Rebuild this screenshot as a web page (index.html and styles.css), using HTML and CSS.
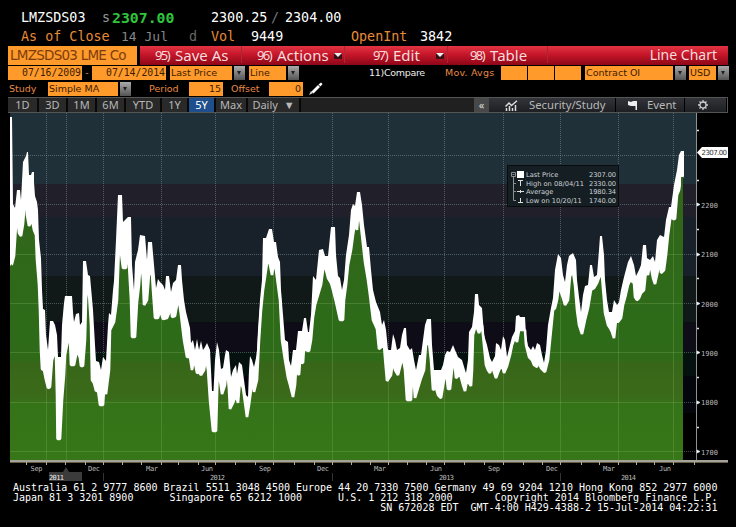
FILE: index.html
```html
<!DOCTYPE html>
<html lang="en">
<head>
    <meta charset="UTF-8">
    <title>LMZSDS03 Line Chart</title>
    <link rel="stylesheet" href="styles.css">
</head>
<body>
<header class="quote">
    <div class="quote-row price-row">
        <span class="ticker">LMZSDS03</span>
        <span class="side">s</span>
        <span class="last">2307.00</span>
        <span class="bid">2300.25</span>
        <span class="slash">/</span>
        <span class="ask">2304.00</span>
    </div>
    <div class="quote-row info-row">
        <span class="asof">As of Close</span>
        <span class="date">14 Jul</span>
        <span class="freq">d</span>
        <span class="vol">Vol</span>
        <span class="vol-value">9449</span>
        <span class="open">OpenInt</span>
        <span>3842</span>
    </div>
</header>

<nav class="menu">
    <div class="security">LMZSDS03 LME Co</div>
    <div class="menu-item save"><i>95)</i>Save As</div>
    <div class="menu-item actions"><i>96)</i>Actions<b class="drop"></b></div>
    <div class="menu-item edit"><i>97)</i>Edit<b class="drop"></b></div>
    <div class="menu-item table"><i>98)</i>Table</div>
    <div class="menu-title">Line Chart</div>
</nav>

<div class="controls">
    <span class="field from">07/16/2009</span>
    <span class="dash">-</span>
    <span class="field to">07/14/2014</span>
    <span class="field price">Last Price</span>
    <span class="arrow"></span>
    <span class="field line">Line</span>
    <span class="arrow"></span>
    <span class="compare">11)Compare</span>
    <span class="avgs">Mov. Avgs</span>
    <span class="field avg"></span>
    <span class="field avg"></span>
    <span class="field avg"></span>
    <span class="field contract">Contract OI</span>
    <span class="arrow"></span>
    <span class="field usd">USD</span>
    <span class="arrow"></span>
</div>

<div class="controls study">
    <span class="study-label">Study</span>
    <span class="field simple">Simple MA</span>
    <span class="arrow"></span>
    <span class="period-label">Period</span>
    <span class="field period">15</span>
    <span class="offset-label">Offset</span>
    <span class="field offset">0</span>
    <svg class="pencil" width="16" height="14" viewBox="0 0 16 14">
        <path d="M1 13l2-4 2 2z" fill="#ddd"/>
        <path d="M3.500 9.500L10 3l2 2-6.500 6.500z" fill="#fff"/>
        <path d="M10.500 2.500L13 .5l1.500 1.500-2 2.500z" fill="#fff"/>
    </svg>
</div>

<div class="tabs">
    <span class="tab t1">1D</span>
    <span class="tab t2">3D</span>
    <span class="tab t3">1M</span>
    <span class="tab t4">6M</span>
    <span class="tab t5">YTD</span>
    <span class="tab t6">1Y</span>
    <span class="tab t7 active">5Y</span>
    <span class="tab t8">Max</span>
    <span class="tab t9">Daily <em>▼</em></span>
    <span class="collapse">«</span>
    <span class="tool security-study">
        <svg width="13" height="11" viewBox="0 0 13 11">
            <path d="M.5 6.500L4 3l2.500 2.500L12 .8" fill="none" stroke="#ddd" stroke-width="1.500"/>
            <path d="M1.500 11V8M4.500 11V6M7.500 11V8M10.500 11V5" stroke="#ddd" stroke-width="1.500"/>
        </svg>
        Security/Study
    </span>
    <span class="tool event">
        <svg width="9" height="10" viewBox="0 0 9 10">
            <path d="M0 1l3 1 2-1h4v9H7.500V6L3 6 0 5z" fill="#eee"/>
        </svg>
        Event
    </span>
    <span class="tool gear">
        <svg width="10" height="10" viewBox="0 0 10 10">
            <circle cx="5" cy="5" r="3" fill="none" stroke="#ccc" stroke-width="1.300"/>
            <path d="M5 0v2M5 8v2M0 5h2M8 5h2M1.500 1.500l1.300 1.300M7.200 7.200l1.300 1.300M8.500 1.500L7.200 2.800M2.800 7.200L1.500 8.500" stroke="#ccc" stroke-width="1.300"/>
        </svg>
    </span>
</div>

<div class="chart">
    <svg class="plot" width="736" height="371" viewBox="0 112 736 371">
        <!-- background bands -->
        <rect x="10" y="113" width="687" height="71" fill="#203038"/>
        <rect x="10" y="184" width="687" height="33" fill="#211f29"/>
        <rect x="10" y="217" width="687" height="59" fill="#182029"/>
        <rect x="10" y="276" width="687" height="46" fill="#101918"/>
        <rect x="10" y="322" width="687" height="30" fill="#0e0d17"/>
        <rect x="10" y="352" width="687" height="24" fill="#04110f"/>
        <rect x="10" y="376" width="687" height="37" fill="#05050e"/>
        <path class="grid" d="M10 155.500H697M10 204.500H697M10 254.500H697M10 303.500H697M10 352.500H697M10 402.500H697M10 451.500H697"/>
        <path class="grid" d="M46.500 113V460M66.500 113V460M103.500 113V460M161.500 113V460M215.500 113V460M273.500 113V460M332.500 113V460M388.500 113V460M444.500 113V460M503.500 113V460M560.500 113V460M618.500 113V460M673.500 113V460"/>

        <!-- price line, thick -->
        <path fill="#fff" d="M10 460V117H12L13 204 15 208 17 190H20L21 200 23 162 26 156 27 152H28L29 175H31L32 172H34L34 182 35 196 37 202 38 210 39 240 41 258 42 290 43 309 45 310 46 335 48 350 50 321 53 321 55 325 57 335 58 357H61L62 325 64 303 65 296H72L73 312 74 322 76 314 79 313 80 325 82 322 83 261H86L88 275 90 276 93 310 95 345 96 361 99 362 101 370 103 357 106 361 108 325 109 313 111 315 113 290 114 281 116 240 118 195H122L123 222 126 219 128 217H131L132 265 134 290 135 262 138 250 140 235 145 236 147 260 148 242H152L154 265 156 288 158 279 160 282 163 285 165 290 166 276H169L171 292 173 283 176 280 178 265H181L182 280 184 300 186 312 190 328 191 343 193 340 195 350 197 339 199 350 201 341 203 350 205 347 207 343 210 350 211 370 212 391H213.500L215 360 217 342 219 350 221 369 223 368 225 355 226 350 229 352 231 377 233 370 236 365 237 374 239 362 242 365 244 380 246 395 248 397 249 370 250 356 252 360 254 367 256 358 257 350 258 330 260 300 262 280 263 238H266L267 235 269 229H272L274 242H276L278 257 280 262 281 290 283 315 285 340 288 342 289 360 291 366 293 350 296 350 298 331H302L304 318H306L308 332 309 332 311 315 313 276 316 280 319 250 323 249 325 256H328L329 246 331 227H335L336 255 338 276 340 278 342 290 344 280 346 255 349 235 351 210 353 204 355 206 357 192H360L362 205 364 225 367 247H369L371 270 373 290 376 302 380 312 382 325 384 320 386 330 388 350 391 350 393 334 395 340 397 350 400 348 402 335 404 328H406L407 345 410 350 412 348 414 360 416 370 419 355 421 355 423 340 425 325 427 319H431L432 345 434 370H441L443 365 445 355 447 351 450 352 453 345 455 350 458 357 462 360 465 370 466 373 468 360 469 332 472 327 474 312 475 294H478L479 305 482 308 484 335 487 345 490 358 492 362 495 356 496 343 499 345 501 350 503 336 505 340 507 357 510 345 512 337 515 331 516 316 519 315 520 317H525L526 335 528 346 531 350 533 346 535 350 537 343 540 345 542 355 544 363 546 350 548 325 551 308 553 298 555 270 558 254 561 258 563 275 565 282 567 265 569 256 573 253 576 260 577 280 579 297 581 312 583 295 585 286 588 285 590 265 592 265 594 277 597 275 599 250 600 236H602L604 255 605 280 607 300 609 312H612L614 300 617 305 619 302 621 290 624 277 628 262 631 256 634 265 636 276 639 270 641 265 643 245H646L647 258 650 260 653 256 655 262 657 240 660 235 664 237 666 220 669 207H671L674 185 677 170 679 155 681 151H684L684 176 683 178V460Z"/>

        <!-- filled area -->
        <defs>
            <path id="area" d="M10 460V266L12 264 14 256 16 225 18 224 19 233 21 236 23 224 25 200 26 190 27 215 29 226 31 222 32 220 34 230 36 235 37 260 39 285 40 310 41 350 42 369 44 370 46 380 48 388 50 387 52 360 54 354 56 355 57 395 57.500 439H60L62 400 64 375 65 355 68 340 70 340 71 365H74L76 355 78 352 80 358 81 366H83L85 340 86 300 87 289 89 293 91 325 92 380 94 383 96 391 98 390 100 405H103L104 390 106 394 109 370 110 330 114 322 117 300 119 245 121 253 123 268H126L127 250 129 265 131 300 132 337H135L137 302 139 285 141 256 143 280 144 305 147 300 149 274H152L153 290 155 318H158L160 310 163 319 167 318 169 313 171 305 172 317 175 316 177 305 179 300 181 315 184 340 187 357H190L192 370 194 358 197 373 199 372 201 375 204 370 206 358 208 370 210 400 213 431H216L217 395 218 365 220 380 222 394 225 385 227 365 229 390 230 409 233 403 236 395 238 403 240 380 243 388 247 417 249 405 251 390 253 375 254 392 257 380 259 340 261 310 263 290 266 270 268 256 270 265 272 275 274 262 276 270 278 285 280 300 282 340 285 360 288 378 290 385 293 397 295 385 296 370 299 375 300 362 303 363 304 348 306 350 309 351 311 340 313 317 315 305 318 295 321 285 323 270 325 266 328 278 331 283 333 290 336 302 340 320H343L344 300 346 285 348 265 351 250 353 235 355 222 357 230 358 217H360L362 235 365 262 368 280 370 295 373 320 377 329 379 349 384 345 385 358 387 381 391 375 393 360 395 370 398 375 401 363 403 358 405 370 407 400H411L412 375 414 385 415 398 418 388 421 378 424 370 426 345 429 342 431 360 433 390 436 388 438 395 441 398 444 380 446 370 448 389H450L452 370 454 358 456 378 460 374 463 385 465 391 467 380 471 386 472 370 473 335 476 325 479 333 482 325 484 345 486 365 488 370 490 373 492 366 494 372 496 378 499 370 502 365 504 373 507 366 510 355 512 345 515 337 517 342 519 330H525L526 345 529 357 532 360 534 365 537 367 538 360 541 368 545 372 548 360 551 330 553 310 555 308 557 300 559 285 561 292 563 298 565 305 568 300 570 276 573 272 575 285 577 310 579 325 582 334 585 320 588 308 591 290 594 288 597 283 600 275 602 276 604 300 605 313 608 325 610 328 612 332 614 338 616 320 618 322 621 318 623 305 625 298 628 285 630 280 634 283 635 297 637 300 639 298 641 293 644 290 646 270 648 275 650 262 653 278 655 284 657 275 660 260 661 273 664 270 666 255 668 235 670 220 672 212 673 219H675L677 195 679 190 681 177 683 177V460Z"/>
            <linearGradient id="green" gradientUnits="userSpaceOnUse" x1="0" y1="190" x2="0" y2="460">
                <stop offset="0" stop-color="#32651a"/>
                <stop offset=".5" stop-color="#2d6b19"/>
                <stop offset=".63" stop-color="#2f6a19"/>
                <stop offset=".64" stop-color="#386619"/>
                <stop offset=".77" stop-color="#3a6b19"/>
                <stop offset=".79" stop-color="#347318"/>
                <stop offset="1" stop-color="#377718"/>
            </linearGradient>
            <clipPath id="in-area"><use href="#area"/></clipPath>
            <clipPath id="inner"><rect x="12" y="113" width="669" height="345"/></clipPath>
        </defs>
        <use href="#area" fill="url(#green)"/>
        <path class="grid-green" clip-path="url(#in-area)" d="M10 254.500H683M10 303.500H683M10 352.500H683M10 402.500H683M10 451.500H683M46.500 180V460M66.500 180V460M103.500 180V460M161.500 180V460M215.500 180V460M273.500 180V460M332.500 180V460M388.500 180V460M444.500 180V460M503.500 180V460M560.500 180V460M618.500 180V460M673.500 180V460"/>
        <g clip-path="url(#inner)">
            <use class="edge" href="#area"/>
        </g>

        <!-- axes -->
        <path d="M696.500 113V463" stroke="#8c9295"/>
        <rect x="10" y="460" width="718" height="2" fill="#a3a39b"/>
        <rect x="10" y="462" width="718" height="1" fill="#665f43"/>
        <path d="M26.500 462v3M46.500 462v3M65.500 462v3M85.500 462v3M103.500 462v3M122.500 462v3M141.500 462v3M161.500 462v3M178.500 462v3M198.500 462v3M215.500 462v3M235.500 462v3M255.500 462v3M273.500 462v3M294.500 462v3M314.500 462v3M332.500 462v3M351.500 462v3M370.500 462v3M388.500 462v3M407.500 462v3M426.500 462v3M444.500 462v3M464.500 462v3M484.500 462v3M503.500 462v3M523.500 462v3M542.500 462v3M560.500 462v3M581.500 462v3M599.500 462v3M618.500 462v3M636.500 462v3M654.500 462v3M673.500 462v3M694.500 462v3" stroke="#b5b18a"/>
        <path d="M697 130.500h2M697 180.500h2M697 229.500h2M697 278.500h2M697 328.500h2M697 377.500h2M697 427.500h2" stroke="#ddd" stroke-width="1.500"/>
        <path d="M697 203l3 1.500-3 1.500zM697 253l3 1.500-3 1.500zM697 302l3 1.500-3 1.500zM697 351l3 1.500-3 1.500zM697 401l3 1.500-3 1.500zM697 450l3 1.500-3 1.500z" fill="#eee" stroke="#eee" stroke-width=".7"/>
        <g class="axis">
            <text x="701" y="208" textLength="17">2200</text>
            <text x="701" y="257" textLength="17">2100</text>
            <text x="701" y="307" textLength="17">2000</text>
            <text x="701" y="356" textLength="17">1900</text>
            <text x="701" y="405" textLength="17">1800</text>
            <text x="701" y="455" textLength="17">1700</text>
        </g>
        <path d="M697 152.500l5-5.500h26v11h-26z" fill="#fff"/>
        <text class="axis-last" x="701.500" y="155" textLength="25.500">2307.00</text>
        <g class="axis">
            <text x="30.500" y="471" textLength="12">Sep</text>
            <text x="88" y="471" textLength="12">Dec</text>
            <text x="146" y="471" textLength="12">Mar</text>
            <text x="201" y="471" textLength="12">Jun</text>
            <text x="259" y="471" textLength="12">Sep</text>
            <text x="317" y="471" textLength="12">Dec</text>
            <text x="374" y="471" textLength="12">Mar</text>
            <text x="430" y="471" textLength="12">Jun</text>
            <text x="488" y="471" textLength="12">Sep</text>
            <text x="546" y="471" textLength="12">Dec</text>
            <text x="603" y="471" textLength="12">Mar</text>
            <text x="659" y="471" textLength="12">Jun</text>
        </g>
        <path d="M49 472h14l3-5 3 5h13v9H49z" fill="#3b3b3b"/>
        <path d="M103.500 473v8M332.500 473v8M560.500 473v8" stroke="#333"/>
        <g class="axis">
            <text class="current" x="49" y="480" textLength="15">2011</text>
            <text x="210" y="480" textLength="15">2012</text>
            <text x="439" y="480" textLength="15">2013</text>
            <text x="621" y="480" textLength="15">2014</text>
        </g>
    </svg>

    <div class="legend">
        <svg width="17" height="38" viewBox="0 0 17 38">
            <path d="M.5 6.500h4v4h-4zM1.500 8.500h2M2.500 11V34.500H5M3 17.500h2M3 25.500h2" fill="none" stroke="#8b9093"/>
            <rect x="6" y="5" width="7" height="7" fill="#fff"/>
            <path d="M7 14.500h5M9.500 15v5M6 25.500h7M9.500 24v3M7 36.500h5M9.500 32v4" stroke="#ddd"/>
        </svg>
        <div class="legend-names">
            <div>Last Price</div>
            <div>High on 08/04/11</div>
            <div>Average</div>
            <div>Low on 10/20/11</div>
        </div>
        <div class="legend-values">
            <div>2307.00</div>
            <div>2330.00</div>
            <div>1980.34</div>
            <div>1740.00</div>
        </div>
    </div>
</div>

<footer>
<pre>Australia 61 2 9777 8600 Brazil 5511 3048 4500 Europe 44 20 7330 7500 Germany 49 69 9204 1210 Hong Kong 852 2977 6000
Japan 81 3 3201 8900      Singapore 65 6212 1000      U.S. 1 212 318 2000       Copyright 2014 Bloomberg Finance L.P.
                                                             SN 672028 EDT  GMT-4:00 H429-4388-2 15-Jul-2014 04:22:31</pre>
</footer>
</body>
</html>
```
FILE: styles.css
```css
* {
    box-sizing: border-box;
}
body {
    margin: 0;
    width: 736px;
    height: 527px;
    overflow: hidden;
    background: #000;
    color: #fff;
    font-family: "DejaVu Sans Mono", monospace;
}
.quote {
    height: 46px;
    padding: 8px 0 0 21px;
    font-size: 13.4px;
    white-space: nowrap;
}
.quote-row {
    display: flex;
    height: 20px;
    line-height: 20px;
}
.info-row {
    height: 18px;
    line-height: 18px;
}
.ticker {
    width: 81px;
}
.side {
    width: 10px;
    color: #999;
}
.last {
    width: 99px;
    color: #2fc43c;
    font-weight: bold;
    font-size: 14.8px;
}
.bid {
    width: 60px;
}
.slash {
    width: 14px;
    color: #777;
}
.asof {
    width: 100px;
    color: #e88a35;
}
.date {
    width: 68px;
    color: #858585;
    font-size: 13px;
}
.freq {
    width: 22px;
    color: #666;
}
.vol {
    width: 40px;
    color: #e88a35;
}
.vol-value {
    width: 100px;
}
.open {
    width: 69px;
    color: #e88a35;
}

/* red menu bar */
.menu {
    display: flex;
    width: 720px;
    height: 19px;
    margin-left: 8px;
    background: linear-gradient(#e23442, #c5162a 45%, #8d0717);
    font-family: "Noto Sans", sans-serif;
    font-size: 14px;
    line-height: 18px;
    color: #f6dcdc;
    white-space: nowrap;
}
.security {
    width: 132px;
    padding-left: 2px;
    border-right: 3px solid #000;
    background: #ff9a2b;
    color: #7c3d0d;
    font-family: "DejaVu Sans", sans-serif;
    font-size: 13.5px;
    letter-spacing: -0.75px;
}
.menu-item {
    display: flex;
    align-items: center;
    height: 17px;
    border-right: 1px solid #ae2633;
    font-size: 15px;
}
.menu-item i {
    width: 20px;
    font-style: normal;
    font-size: 13px;
    letter-spacing: -1.6px;
}
.save {
    width: 102px;
    padding-left: 15px;
}
.actions {
    width: 103px;
    padding-left: 15px;
}
.edit {
    width: 103px;
    padding-left: 28px;
}
.table {
    width: 100px;
    padding-left: 22px;
}
.drop {
    width: 8px;
    height: 6px;
    margin: 2px 0 0 5px;
    border: 2px solid #3a1014;
    border-top: 4px solid #eee;
    border-left: 4px solid #3a1014;
    border-right: 4px solid #3a1014;
}
.edit .drop {
    margin-left: 16px;
}
.menu-title {
    margin-left: auto;
    padding-right: 11px;
}

/* orange input rows */
.controls {
    display: flex;
    height: 17px;
    padding: 1px 0 0 8px;
    font-family: "DejaVu Sans", sans-serif;
    font-size: 9.5px;
    line-height: 13px;
    color: #e88a45;
    white-space: nowrap;
}
.field {
    height: 14px;
    background: #ff9a2b;
    color: #3b1c00;
    padding-left: 1px;
}
.from,
.to {
    width: 74px;
    padding-right: 1px;
    text-align: right;
    font-family: "DejaVu Sans Mono", monospace;
    font-size: 9.8px;
}
.dash {
    width: 10px;
    text-align: center;
}
.to {
    margin-right: 4px;
}
.price {
    width: 62px;
    margin-right: 2px;
}
.arrow {
    width: 11px;
    height: 14px;
    padding: 5px 0 0 3px;
    background: linear-gradient(#aaa, #555);
}
.arrow::before {
    content: "";
    display: block;
    width: 0;
    border: 2.5px solid transparent;
    border-top: 4px solid #222;
    border-bottom: 0;
}
.line {
    width: 37px;
    margin: 0 2px 0 4px;
}
.compare {
    width: 76px;
    margin-left: 70px;
    color: #eee;
    letter-spacing: -0.3px;
}
.avgs {
    width: 56px;
    letter-spacing: 0.2px;
}
.avg {
    width: 26px;
    margin-right: 1px;
}
.contract {
    width: 88px;
    margin: 0 2px 0 3px;
}
.usd {
    width: 27px;
    margin: 0 2px 0 3px;
}
.study {
    height: 15px;
    padding-top: 0;
}
.study-label {
    width: 40px;
    padding-left: 1px;
}
.simple {
    width: 70px;
    margin-right: 2px;
}
.period-label {
    width: 40px;
    margin-left: 18px;
}
.period {
    width: 34px;
    padding-right: 2px;
    text-align: right;
}
.offset-label {
    width: 38px;
    margin-left: 8px;
}
.offset {
    width: 34px;
    padding-right: 2px;
    text-align: right;
}
.pencil {
    margin-left: 5px;
}

/* range tabs */
.tabs {
    display: flex;
    width: 720px;
    height: 16px;
    margin-left: 8px;
    border: 1px solid #555;
    border-width: 1px 1px 1px 0;
    background: #202020;
    font-family: "Noto Sans", sans-serif;
    font-size: 11px;
    line-height: 14px;
    color: #b8b8b8;
    white-space: nowrap;
}
.tab {
    border-right: 2px solid #080808;
    text-align: center;
    background: #292929;
}
.t1 { width: 31px; }
.t2 { width: 29px; }
.t3 { width: 29px; }
.t4 { width: 29px; }
.t5 { width: 36px; }
.t6 { width: 27px; }
.t7 { width: 27px; }
.t8 { width: 32px; }
.t9 { width: 53px; }
.tab em {
    padding-left: 3px;
    font-style: normal;
    font-size: 11px;
}
.active {
    background: #1e4f8c;
    color: #fff;
}
.collapse {
    width: 15px;
    margin-left: 173px;
    background: #484848;
    color: #ddd;
    text-align: center;
}
.tool {
    display: flex;
    align-items: center;
    border-right: 1px solid #000;
    background: linear-gradient(#32343a, #1d1f23);
    font-size: 11.3px;
}
.security-study {
    width: 127px;
    padding-left: 16px;
    gap: 11px;
}
.event {
    width: 69px;
    padding-left: 12px;
    gap: 10px;
}
.gear {
    flex: 1;
    padding-left: 13px;
}

.chart {
    position: relative;
    height: 371px;
    margin-top: -1px;
}
.plot {
    display: block;
}
.grid {
    fill: none;
    stroke: #99bbbb;
    stroke-opacity: 0.4;
    stroke-dasharray: 1 1;
}
.grid-green {
    fill: none;
    stroke: #83b05c;
    stroke-opacity: 0.3;
}
.edge {
    fill: none;
    stroke: #fff;
    stroke-width: 2.6px;
    stroke-linejoin: bevel;
}
.axis {
    fill: #bbb;
    font-family: "DejaVu Sans Mono", monospace;
    font-size: 7px;
}
.current {
    fill: #eee;
}
.axis-last {
    fill: #333;
    font-family: "DejaVu Sans", sans-serif;
    font-size: 7px;
}
.legend {
    position: absolute;
    left: 507px;
    top: 53px;
    display: flex;
    width: 112px;
    height: 42px;
    padding-left: 3px;
    border: 1px solid #080c0e;
    background: #141e23;
    color: #d0d4d6;
    font-family: "DejaVu Sans", sans-serif;
    font-size: 6.7px;
    line-height: 8.5px;
    white-space: nowrap;
}
.legend svg {
    margin-right: -3px;
}
.legend-names {
    width: 64px;
    padding: 5px 0 0 1px;
}
.legend-values {
    padding-top: 5px;
    letter-spacing: -0.1px;
}
footer pre {
    margin: 0 0 0 13px;
    font-family: "DejaVu Sans Mono", monospace;
    font-size: 10px;
    line-height: 10px;
}
```
